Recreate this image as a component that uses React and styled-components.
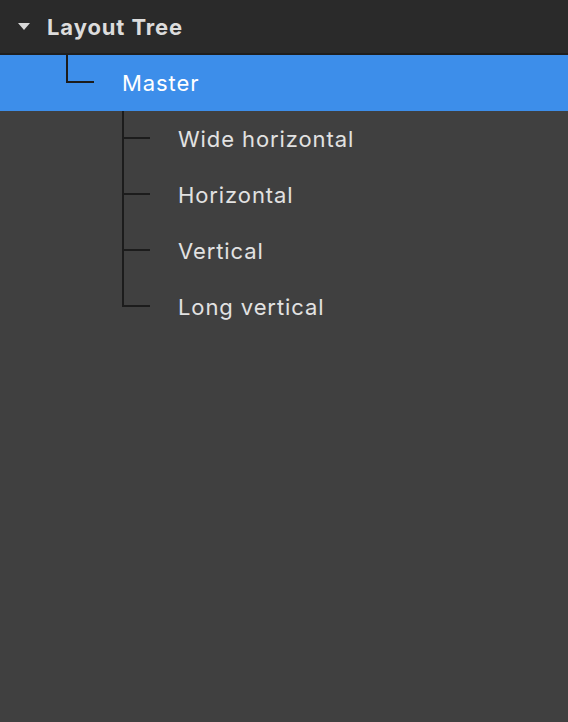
import React from "react";
import styled, { createGlobalStyle } from "styled-components";

const GlobalStyle = createGlobalStyle`
  html, body {
    margin: 0;
    padding: 0;
    height: 100%;
    background: #404040;
  }
  #root {
    height: 100%;
  }
`;

const Panel = styled.div`
  display: flex;
  flex-direction: column;
  height: 722px;
  background: #404040;
  font-family: Inter, "Open Sans", sans-serif;
`;

const Header = styled.div`
  display: flex;
  align-items: center;
  height: 53px;
  border-bottom: 2px solid #1e1e1e;
  background: #2a2a2a;
  padding-left: 18px;
  gap: 17px;
`;

const Caret = styled.span`
  width: 0;
  height: 0;
  border-left: 6px solid transparent;
  border-right: 6px solid transparent;
  border-top: 7px solid #d8d8d8;
  margin-top: -1px;
`;

const Title = styled.div`
  font-size: 22px;
  font-weight: 700;
  color: #dcdcdc;
  letter-spacing: 0.9px;
`;

const Row = styled.div`
  display: flex;
  align-items: stretch;
  height: 56px;
  background: ${(p) => (p.$selected ? "#3d8eea" : "transparent")};
`;

// each tree level is 56px deep
const Indent = styled.div`
  width: ${(p) => p.$level * 56 + 10}px;
  flex-shrink: 0;
`;

const Connector = styled.div`
  position: relative;
  width: 28px;
  flex-shrink: 0;

  &::before {
    content: "";
    position: absolute;
    left: 0;
    top: 0;
    width: 2px;
    height: ${(p) => (p.$last ? "28px" : "100%")};
    background: #1c1c1c;
  }

  &::after {
    content: "";
    position: absolute;
    left: 0;
    top: 26px;
    width: 28px;
    height: 2px;
    background: #1c1c1c;
  }
`;

const Label = styled.div`
  display: flex;
  align-items: center;
  padding-left: 28px;
  font-size: 22px;
  letter-spacing: 0.9px;
  color: ${(p) => (p.$selected ? "#ffffff" : "#e2e2e2")};
`;

const nodes = [
  { name: "Master", level: 1, last: true, selected: true },
  { name: "Wide horizontal", level: 2 },
  { name: "Horizontal", level: 2 },
  { name: "Vertical", level: 2 },
  { name: "Long vertical", level: 2, last: true },
];

export default function App() {
  return (
    <Panel>
      <GlobalStyle />
      <Header>
        <Caret />
        <Title>Layout Tree</Title>
      </Header>
      {nodes.map((node) => (
        <Row key={node.name} $selected={node.selected}>
          <Indent $level={node.level} />
          <Connector $last={node.last} />
          <Label $selected={node.selected}>{node.name}</Label>
        </Row>
      ))}
    </Panel>
  );
}
